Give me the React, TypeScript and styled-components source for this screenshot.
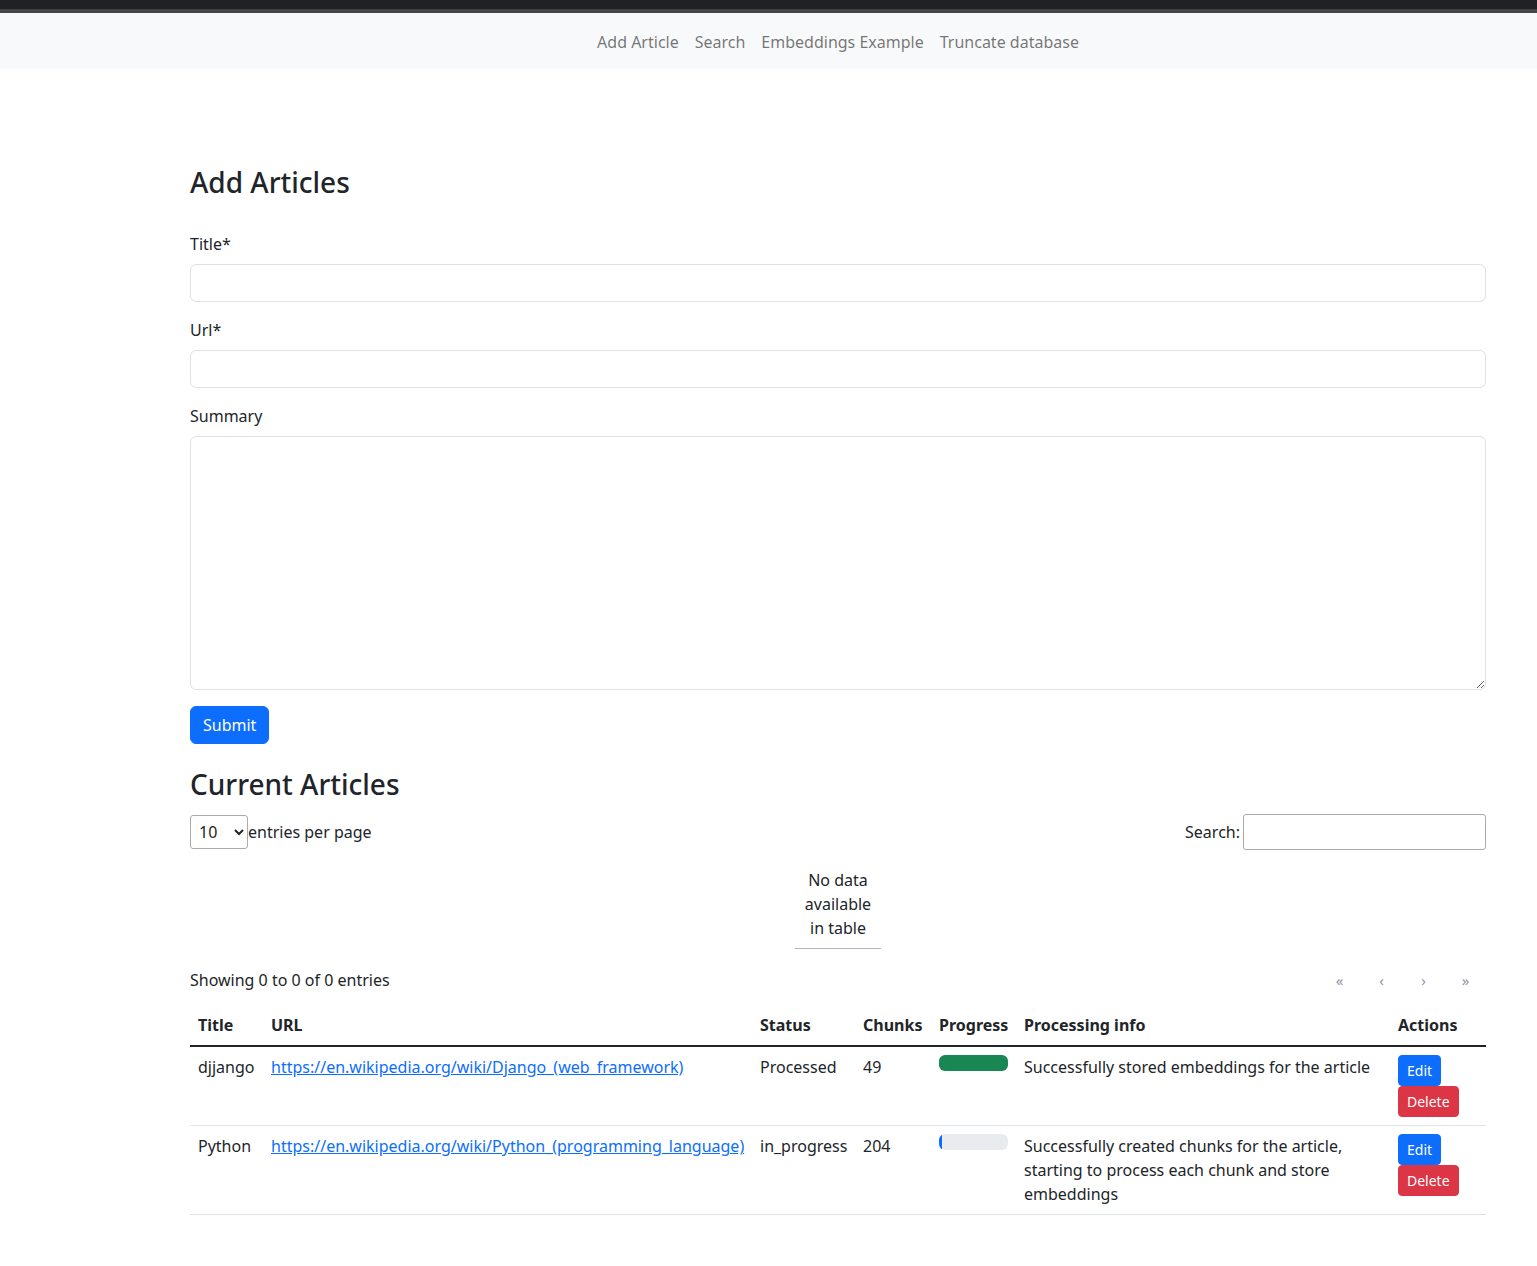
import React from "react";
import styled, { createGlobalStyle } from "styled-components";

const Global = createGlobalStyle`
  *, *::before, *::after { box-sizing: border-box; }
  body {
    margin: 0;
    font-family: "Noto Sans", "Liberation Sans", sans-serif;
    font-size: 16px;
    line-height: 1.5;
    color: #212529;
    background: #fff;
  }
`;

const TopBand = styled.div`
  height: 13px;
  background: #202124;
  border-bottom: 4px solid #464646;
`;

const Navbar = styled.nav`
  height: 56px;
  padding-top: 2px;
  background: #f8f9fa;
  display: flex;
  align-items: center;
`;

const NavInner = styled.div`
  margin-left: 190px;
  width: 1296px;
  display: flex;
  justify-content: center;
`;

const NavLink = styled.a`
  padding: 8px;
  color: rgba(0, 0, 0, 0.55);
  text-decoration: none;
  cursor: pointer;
`;

const Container = styled.main`
  margin-left: 190px;
  width: 1296px;
  padding-top: 97px;
  padding-bottom: 50px;
`;

const Heading = styled.h2<{ $top?: number }>`
  font-size: 28px;
  font-weight: 500;
  line-height: 1.2;
  margin: ${(p) => p.$top ?? 0}px 0 8px;
`;

const Form = styled.form`
  margin-top: 32px;
`;

const Field = styled.div`
  margin-bottom: 16px;
`;

const Label = styled.label`
  display: inline-block;
  margin-bottom: 8px;
`;

const Input = styled.input`
  display: block;
  width: 100%;
  height: 38px;
  padding: 6px 12px;
  font: inherit;
  color: #212529;
  border: 1px solid #dee2e6;
  border-radius: 6px;
  background: #fff;
`;

const TextArea = styled.textarea`
  display: block;
  width: 100%;
  height: 254px;
  padding: 6px 12px;
  font: inherit;
  color: #212529;
  border: 1px solid #dee2e6;
  border-radius: 6px;
  background: #fff;
`;

const Button = styled.button<{ $variant?: "primary" | "danger"; $small?: boolean }>`
  display: inline-block;
  font-family: inherit;
  font-size: ${(p) => (p.$small ? 14 : 16)}px;
  line-height: 1.5;
  padding: ${(p) => (p.$small ? "4px 8px" : "6px 12px")};
  border-radius: ${(p) => (p.$small ? 4 : 6)}px;
  color: #fff;
  background: ${(p) => (p.$variant === "danger" ? "#dc3545" : "#0d6efd")};
  border: 1px solid ${(p) => (p.$variant === "danger" ? "#dc3545" : "#0d6efd")};
  cursor: pointer;
`;

const TopRow = styled.div`
  display: flex;
  justify-content: space-between;
  align-items: center;
  height: 38px;
  margin-top: 12px;
`;

const LengthBox = styled.div`
  display: flex;
  align-items: center;
`;

const Select = styled.select`
  width: 58px;
  height: 34px;
  padding: 4px;
  font: inherit;
  color: #212529;
  border: 1px solid #aaa;
  border-radius: 3px;
  background: transparent;
`;

const SearchBox = styled.div`
  display: flex;
  align-items: center;
`;

const SearchInput = styled.input`
  width: 243px;
  height: 36px;
  margin-left: 3px;
  padding: 5px;
  font: inherit;
  border: 1px solid #aaa;
  border-radius: 3px;
`;

const EmptyTable = styled.table`
  margin: 9px auto 0;
  border-collapse: collapse;
`;

const EmptyCell = styled.td`
  width: 1px;
  padding: 8px 10px;
  text-align: center;
  border-bottom: 1px solid #b5b5b5;
`;

const InfoRow = styled.div`
  display: flex;
  justify-content: space-between;
  align-items: center;
  margin-top: 19px;
`;

const Pager = styled.div`
  display: flex;
`;

const PageButton = styled.span`
  width: 41px;
  margin-left: 1px;
  text-align: center;
  color: #8f97a3;
  font-size: 15px;
`;

const Table = styled.table`
  width: 100%;
  margin-top: 13px;
  border-collapse: collapse;
  table-layout: fixed;
  vertical-align: top;
`;

const Col = styled.col<{ $w: number }>`
  width: ${(p) => p.$w}px;
`;

const Th = styled.th`
  text-align: left;
  font-weight: 700;
  padding: 8px;
  white-space: nowrap;
  border-bottom: 2px solid #212529;
`;

const Td = styled.td`
  padding: 8px;
  vertical-align: top;
  border-bottom: 1px solid #dee2e6;
`;

const Link = styled.a`
  color: #0d6efd;
  text-decoration: underline;
  white-space: nowrap;
`;

const Progress = styled.div`
  height: 16px;
  border-radius: 6px;
  background: #e9ecef;
  overflow: hidden;
  display: flex;
`;

const ProgressFill = styled.div<{ $done: boolean }>`
  height: 100%;
  background: ${(p) => (p.$done ? "#198754" : "#0d6efd")};
`;

const Actions = styled.div`
  display: flex;
  flex-direction: column;
  align-items: flex-start;
`;

const articles = [
  {
    title: "djjango",
    url: "https://en.wikipedia.org/wiki/Django_(web_framework)",
    status: "Processed",
    chunks: 49,
    progress: 100,
    info: "Successfully stored embeddings for the article",
  },
  {
    title: "Python",
    url: "https://en.wikipedia.org/wiki/Python_(programming_language)",
    status: "in_progress",
    chunks: 204,
    progress: 4,
    info: "Successfully created chunks for the article, starting to process each chunk and store embeddings",
  },
];

const widths = [73, 489, 103, 76, 85, 374, 96];

export default function App() {
  return (
    <>
      <Global />
      <TopBand />
      <Navbar>
        <NavInner>
          <NavLink>Add Article</NavLink>
          <NavLink>Search</NavLink>
          <NavLink>Embeddings Example</NavLink>
          <NavLink>Truncate database</NavLink>
        </NavInner>
      </Navbar>
      <Container>
        <Heading>Add Articles</Heading>
        <Form onSubmit={(e) => e.preventDefault()}>
          <Field>
            <Label>Title*</Label>
            <Input type="text" />
          </Field>
          <Field>
            <Label>Url*</Label>
            <Input type="text" />
          </Field>
          <Field>
            <Label>Summary</Label>
            <TextArea rows={10} />
          </Field>
          <Button type="submit" $variant="primary">Submit</Button>
        </Form>

        <Heading $top={24}>Current Articles</Heading>
        <TopRow>
          <LengthBox>
            <Select defaultValue="10">
              <option value="10">10</option>
              <option value="25">25</option>
              <option value="50">50</option>
            </Select>
            <span>entries per page</span>
          </LengthBox>
          <SearchBox>
            <span>Search:</span>
            <SearchInput type="search" />
          </SearchBox>
        </TopRow>
        <EmptyTable>
          <tbody>
            <tr>
              <EmptyCell>No data available in table</EmptyCell>
            </tr>
          </tbody>
        </EmptyTable>
        <InfoRow>
          <span>Showing 0 to 0 of 0 entries</span>
          <Pager>
            <PageButton>«</PageButton>
            <PageButton>‹</PageButton>
            <PageButton>›</PageButton>
            <PageButton>»</PageButton>
          </Pager>
        </InfoRow>

        <Table>
          <colgroup>
            {widths.map((w, i) => (
              <Col key={i} $w={w} />
            ))}
          </colgroup>
          <thead>
            <tr>
              <Th>Title</Th>
              <Th>URL</Th>
              <Th>Status</Th>
              <Th>Chunks</Th>
              <Th>Progress</Th>
              <Th>Processing info</Th>
              <Th>Actions</Th>
            </tr>
          </thead>
          <tbody>
            {articles.map((a) => (
              <tr key={a.title}>
                <Td>{a.title}</Td>
                <Td>
                  <Link href="#">{a.url}</Link>
                </Td>
                <Td>{a.status}</Td>
                <Td>{a.chunks}</Td>
                <Td>
                  <Progress>
                    <ProgressFill $done={a.progress === 100} style={{ width: `${a.progress}%` }} />
                  </Progress>
                </Td>
                <Td>{a.info}</Td>
                <Td>
                  <Actions>
                    <Button $small $variant="primary">Edit</Button>
                    <Button $small $variant="danger">Delete</Button>
                  </Actions>
                </Td>
              </tr>
            ))}
          </tbody>
        </Table>
      </Container>
    </>
  );
}
